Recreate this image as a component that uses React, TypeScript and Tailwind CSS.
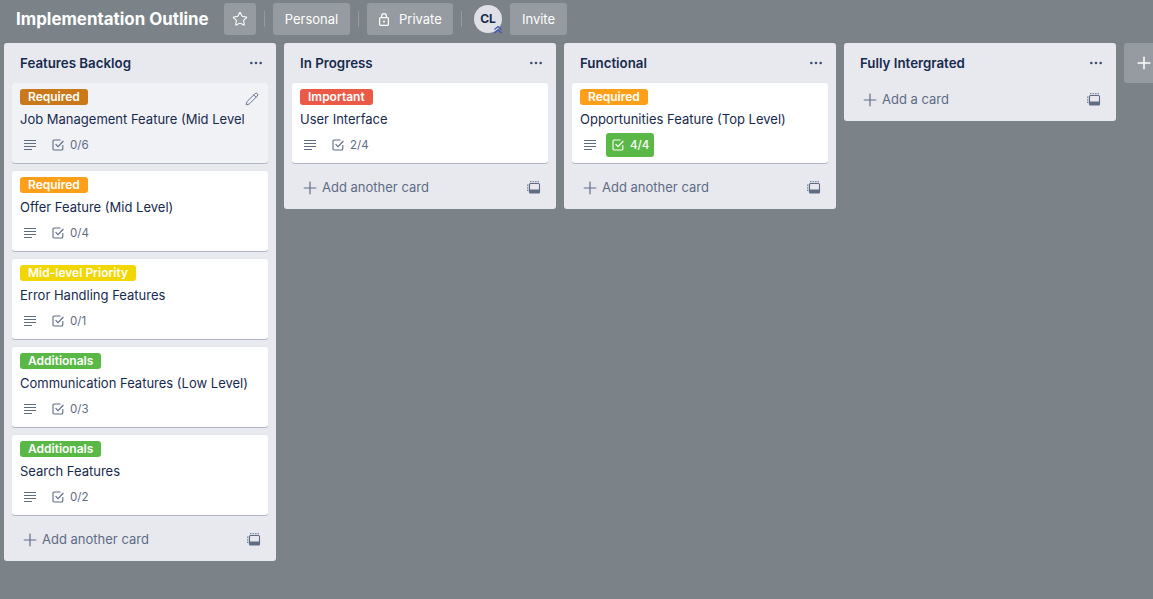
import { Ellipsis, Pencil, Plus, Star } from "lucide-react";

type Card = {
  label: string;
  labelColor: string;
  title: string;
  done: string;
  complete?: boolean;
  hovered?: boolean;
};

const lists: { name: string; addText: string; cards: Card[] }[] = [
  {
    name: "Features Backlog",
    addText: "Add another card",
    cards: [
      { label: "Required", labelColor: "bg-[#c9781a]", title: "Job Management Feature (Mid Level)", done: "0/6", hovered: true },
      { label: "Required", labelColor: "bg-[#ff9f1a]", title: "Offer Feature (Mid Level)", done: "0/4" },
      { label: "Mid-level Priority", labelColor: "bg-[#f2d600]", title: "Error Handling Features", done: "0/1" },
      { label: "Additionals", labelColor: "bg-[#5ab946]", title: "Communication Features (Low Level)", done: "0/3" },
      { label: "Additionals", labelColor: "bg-[#5ab946]", title: "Search Features", done: "0/2" },
    ],
  },
  {
    name: "In Progress",
    addText: "Add another card",
    cards: [{ label: "Important", labelColor: "bg-[#eb5a46]", title: "User Interface", done: "2/4" }],
  },
  {
    name: "Functional",
    addText: "Add another card",
    cards: [
      { label: "Required", labelColor: "bg-[#ff9f1a]", title: "Opportunities Feature (Top Level)", done: "4/4", complete: true },
    ],
  },
  { name: "Fully Intergrated", addText: "Add a card", cards: [] },
];

const DescIcon = () => (
  <svg width="12" height="12" viewBox="0 0 12 12" className="text-[#5e6c84] shrink-0">
    <path d="M0 1.5h12M0 4.5h12M0 7.5h12M0 10.5h8" stroke="currentColor" strokeWidth="1.2" fill="none" />
  </svg>
);

const CheckIcon = () => (
  <svg width="12" height="12" viewBox="0 0 12 12" fill="none" stroke="currentColor" className="shrink-0">
    <path d="M10.8 6v4a1 1 0 0 1-1 1H2a1 1 0 0 1-1-1V2a1 1 0 0 1 1-1h6.5" strokeWidth="1.1" />
    <path d="M3.6 5.2 6 7.6 11.4 2" strokeWidth="1.2" />
  </svg>
);

const TemplateIcon = () => (
  <svg width="14" height="14" viewBox="0 0 14 14" fill="none" className="text-[#5e6c84]">
    <rect x="2.5" y="2.5" width="10" height="9.5" rx="1" stroke="currentColor" strokeWidth="1.1" />
    <rect x="2.5" y="8.5" width="10" height="3.5" fill="currentColor" />
    <path d="M.8 3.5v7M3 .8h9" stroke="currentColor" strokeWidth="1.1" strokeDasharray="1.5 1" />
  </svg>
);

const LockIcon = () => (
  <svg width="10" height="13" viewBox="0 0 10 13" fill="none" stroke="currentColor" className="shrink-0">
    <rect x="0.6" y="4.6" width="8.8" height="7.8" rx="1" strokeWidth="1.2" />
    <path d="M2.6 4.6V3a2.4 2.4 0 0 1 4.8 0v1.6" strokeWidth="1.2" />
    <circle cx="5" cy="8.5" r="1" fill="currentColor" stroke="none" />
  </svg>
);

const Divider = () => <div className="w-px h-4 bg-white/20 mx-2" />;

const BoardCard = ({ card }: { card: Card }) => (
  <div
    className={`relative rounded-[3px] px-2 pt-1.5 pb-1.5 shadow-[0_1px_0_#091e4240] ${
      card.hovered ? "bg-[#f1f2f6]" : "bg-white"
    }`}
  >
    <div className={`w-fit h-4 px-2 rounded-[3px] text-white text-xs font-semibold leading-4 ${card.labelColor}`}>
      {card.label}
    </div>
    <div className={`mt-1 h-5 text-[13px] leading-5 text-[#172b4d] whitespace-nowrap overflow-hidden ${card.hovered ? "w-[224px]" : ""}`}>
      {card.title}
    </div>
    <div className="mt-1 h-6 flex items-center pl-1">
      <DescIcon />
      {card.complete ? (
        <div className="ml-2.5 h-6 w-12 pl-1.5 flex items-center gap-1.5 rounded-[3px] bg-[#5ab946] text-white text-[11.5px] font-medium">
          <CheckIcon />
          <span className="leading-[26px]">{card.done}</span>
        </div>
      ) : (
        <div className="ml-2.5 h-6 px-1.5 flex items-center gap-1.5 text-[#5e6c84] text-[11.5px]">
          <CheckIcon />
          <span className="leading-[26px]">{card.done}</span>
        </div>
      )}
    </div>
    {card.hovered && (
      <Pencil size={14} strokeWidth={1.6} className="absolute top-[9px] right-[9px] text-[#5e6c84]" />
    )}
  </div>
);

export default function App() {
  return (
    <div
      className="w-[1153px] h-[599px] overflow-hidden bg-[#7b8389]"
      style={{ fontFamily: "Inter, 'Liberation Sans', sans-serif" }}
    >
      {/* header */}
      <div className="h-[43px] pt-[3px] pl-4 flex items-start text-white">
        <h1 className="w-[208px] h-8 text-[16.9px] font-bold leading-8 whitespace-nowrap">
          Implementation Outline
        </h1>
        <button className="w-8 h-8 flex items-center justify-center rounded-[3px] bg-white/20">
          <Star size={16} strokeWidth={1.6} />
        </button>
        <div className="h-8 flex items-center"><Divider /></div>
        <button className="w-[77px] h-8 rounded-[3px] bg-white/20 text-[13px] leading-8">Personal</button>
        <div className="h-8 flex items-center"><Divider /></div>
        <button className="w-[86px] h-8 pl-3 flex items-center gap-[10px] rounded-[3px] bg-white/20 text-[13px]">
          <LockIcon />
          <span className="leading-8">Private</span>
        </button>
        <div className="h-8 flex items-center"><Divider /></div>
        <div className="relative ml-[4px] mt-[2px] w-7 h-7 rounded-full bg-[#dfe1e6] flex items-center justify-center text-xs font-bold text-[#172b4d]">
          CL
          <svg width="10" height="9" viewBox="0 0 10 9" fill="none" stroke="#3b4fc4" className="absolute right-[-1px] bottom-[-1px]">
            <path d="M1.5 4.5 5 1.5l3.5 3M1.5 8 5 5l3.5 3" strokeWidth="1.1" />
          </svg>
        </div>
        <button className="ml-2 w-[57px] h-8 rounded-[3px] bg-white/20 text-[13px] leading-8">Invite</button>
      </div>

      {/* lists */}
      <div className="flex items-start gap-2 pl-1">
        {lists.map((list) => (
          <div key={list.name} className="w-[272px] shrink-0 rounded-[3px] bg-[#e8e9ef]">
            <div className="h-10 pl-4 pr-3 flex items-center justify-between">
              <span className="mt-px text-[13.3px] font-semibold text-[#172b4d]">{list.name}</span>
              <Ellipsis size={16} className="text-[#42526e]" />
            </div>
            {list.cards.length > 0 && (
              <div className="px-2 mb-2 flex flex-col gap-2">
                {list.cards.map((card) => (
                  <BoardCard key={card.title} card={card} />
                ))}
              </div>
            )}
            <div className="h-[38px] pb-[5px] pl-4 pr-[15px] flex items-center text-[#5e6c84] text-[13px]">
              <Plus size={20} strokeWidth={1.4} />
              <span className="ml-[2px] flex-1">{list.addText}</span>
              <TemplateIcon />
            </div>
          </div>
        ))}
        <div className="w-[272px] h-10 shrink-0 rounded-[3px] bg-white/20 text-white pl-2.5 flex items-center">
          <Plus size={20} strokeWidth={1.8} />
        </div>
      </div>
    </div>
  );
}
